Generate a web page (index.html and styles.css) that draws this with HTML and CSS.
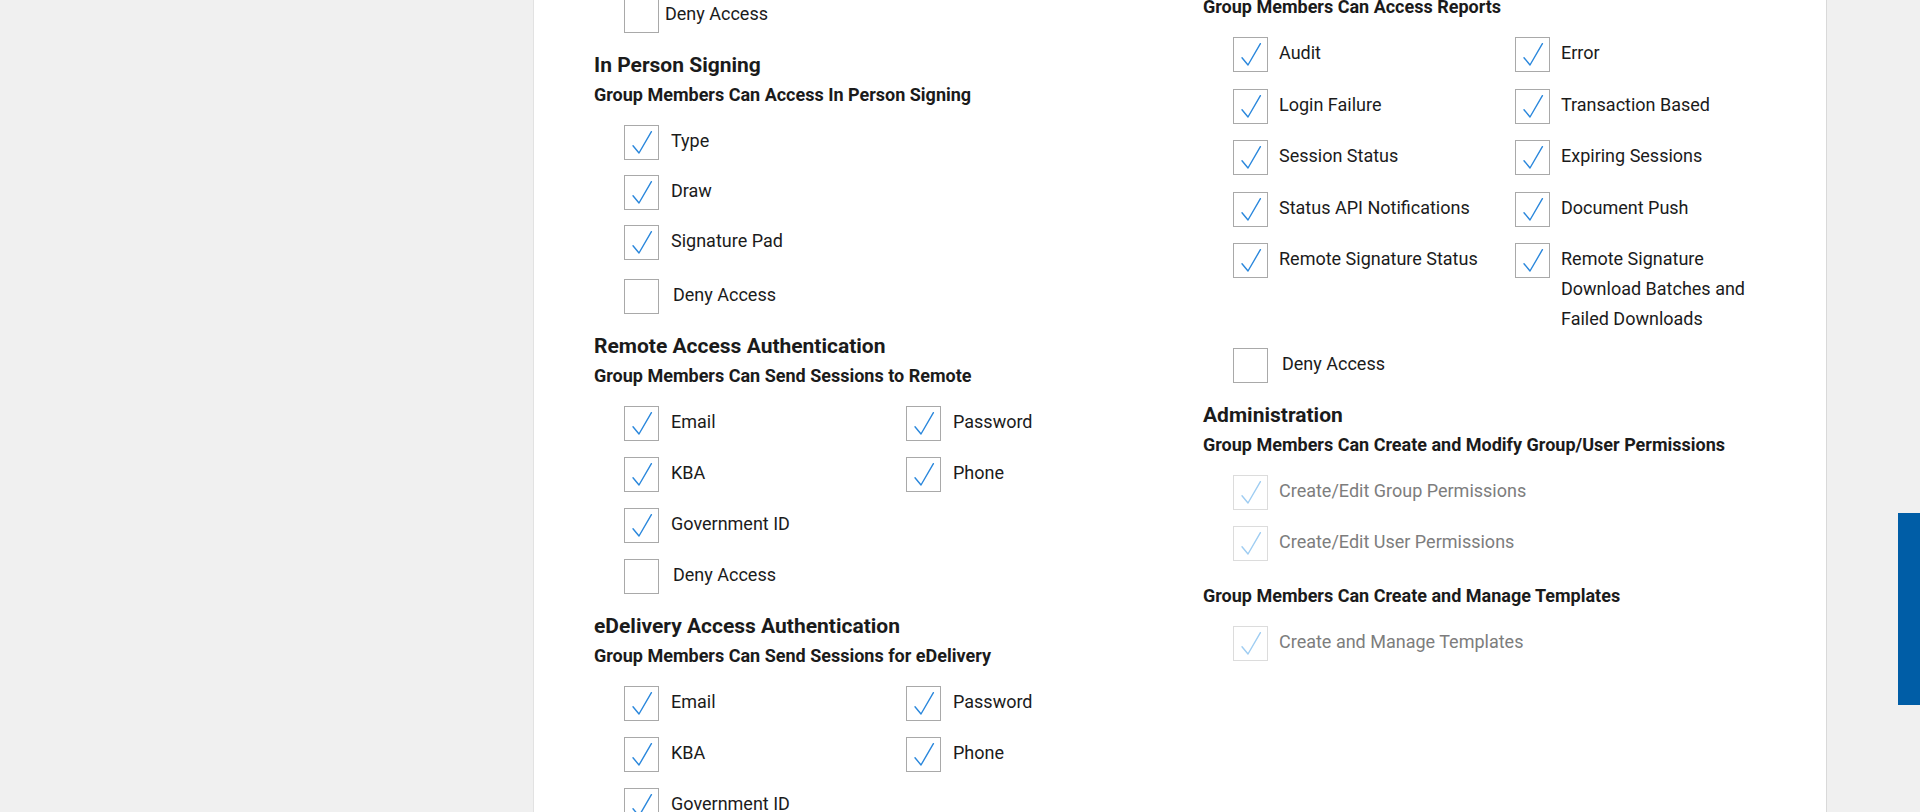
FILE: index.html
```html
<!DOCTYPE html>
<html lang="en">
<head>
<meta charset="utf-8">
<title>Group Permissions</title>
<link rel="stylesheet" href="styles.css">
</head>
<body>
<svg width="0" height="0" class="defs" aria-hidden="true">
  <symbol id="tick" viewBox="0 0 33 33">
    <polyline points="8,19.7 14,27 26.4,5.7" fill="none" stroke="currentColor" stroke-width="1.4" stroke-linecap="round" stroke-linejoin="round"/>
  </symbol>
</svg>
<div class="page">
  <main class="panel">
    <div class="col col-left">
      <div class="opts">
        <label class="opt deny deny-top"><span class="box"></span><span class="lbl">Deny Access</span></label>
      </div>

      <h2 class="head">In Person Signing</h2>
      <h3 class="sub">Group Members Can Access In Person Signing</h3>
      <div class="opts one tight">
        <label class="opt"><span class="box"><svg class="tick"><use href="#tick"/></svg></span><span class="lbl">Type</span></label>
        <label class="opt"><span class="box"><svg class="tick"><use href="#tick"/></svg></span><span class="lbl">Draw</span></label>
        <label class="opt"><span class="box"><svg class="tick"><use href="#tick"/></svg></span><span class="lbl">Signature Pad</span></label>
        <label class="opt deny"><span class="box"></span><span class="lbl">Deny Access</span></label>
      </div>

      <h2 class="head">Remote Access Authentication</h2>
      <h3 class="sub">Group Members Can Send Sessions to Remote</h3>
      <div class="opts two">
        <label class="opt"><span class="box"><svg class="tick"><use href="#tick"/></svg></span><span class="lbl">Email</span></label>
        <label class="opt"><span class="box"><svg class="tick"><use href="#tick"/></svg></span><span class="lbl">Password</span></label>
        <label class="opt"><span class="box"><svg class="tick"><use href="#tick"/></svg></span><span class="lbl">KBA</span></label>
        <label class="opt"><span class="box"><svg class="tick"><use href="#tick"/></svg></span><span class="lbl">Phone</span></label>
        <label class="opt"><span class="box"><svg class="tick"><use href="#tick"/></svg></span><span class="lbl">Government ID</span></label>
        <label class="opt deny span"><span class="box"></span><span class="lbl">Deny Access</span></label>
      </div>

      <h2 class="head">eDelivery Access Authentication</h2>
      <h3 class="sub">Group Members Can Send Sessions for eDelivery</h3>
      <div class="opts two">
        <label class="opt"><span class="box"><svg class="tick"><use href="#tick"/></svg></span><span class="lbl">Email</span></label>
        <label class="opt"><span class="box"><svg class="tick"><use href="#tick"/></svg></span><span class="lbl">Password</span></label>
        <label class="opt"><span class="box"><svg class="tick"><use href="#tick"/></svg></span><span class="lbl">KBA</span></label>
        <label class="opt"><span class="box"><svg class="tick"><use href="#tick"/></svg></span><span class="lbl">Phone</span></label>
        <label class="opt"><span class="box"><svg class="tick"><use href="#tick"/></svg></span><span class="lbl">Government ID</span></label>
        <label class="opt deny span"><span class="box"></span><span class="lbl">Deny Access</span></label>
      </div>
    </div>

    <div class="col col-right">
      <h3 class="sub first">Group Members Can Access Reports</h3>
      <div class="opts two loose">
        <label class="opt"><span class="box"><svg class="tick"><use href="#tick"/></svg></span><span class="lbl">Audit</span></label>
        <label class="opt"><span class="box"><svg class="tick"><use href="#tick"/></svg></span><span class="lbl">Error</span></label>
        <label class="opt"><span class="box"><svg class="tick"><use href="#tick"/></svg></span><span class="lbl">Login Failure</span></label>
        <label class="opt"><span class="box"><svg class="tick"><use href="#tick"/></svg></span><span class="lbl">Transaction Based</span></label>
        <label class="opt"><span class="box"><svg class="tick"><use href="#tick"/></svg></span><span class="lbl">Session Status</span></label>
        <label class="opt"><span class="box"><svg class="tick"><use href="#tick"/></svg></span><span class="lbl">Expiring Sessions</span></label>
        <label class="opt"><span class="box"><svg class="tick"><use href="#tick"/></svg></span><span class="lbl">Status API Notifications</span></label>
        <label class="opt"><span class="box"><svg class="tick"><use href="#tick"/></svg></span><span class="lbl">Document Push</span></label>
        <label class="opt"><span class="box"><svg class="tick"><use href="#tick"/></svg></span><span class="lbl">Remote Signature Status</span></label>
        <label class="opt"><span class="box"><svg class="tick"><use href="#tick"/></svg></span><span class="lbl">Remote Signature Download Batches and Failed Downloads</span></label>
        <label class="opt deny span"><span class="box"></span><span class="lbl">Deny Access</span></label>
      </div>

      <h2 class="head">Administration</h2>
      <h3 class="sub">Group Members Can Create and Modify Group/User Permissions</h3>
      <div class="opts one">
        <label class="opt off"><span class="box"><svg class="tick"><use href="#tick"/></svg></span><span class="lbl">Create/Edit Group Permissions</span></label>
        <label class="opt off"><span class="box"><svg class="tick"><use href="#tick"/></svg></span><span class="lbl">Create/Edit User Permissions</span></label>
      </div>

      <h3 class="sub alone">Group Members Can Create and Manage Templates</h3>
      <div class="opts one">
        <label class="opt off"><span class="box"><svg class="tick"><use href="#tick"/></svg></span><span class="lbl">Create and Manage Templates</span></label>
      </div>
    </div>
  </main>
</div>
<a class="tab" href="#" aria-label="Feedback"></a>
</body>
</html>
```

FILE: styles.css
```css
html, body {
  margin: 0;
  padding: 0;
  height: 100%;
}

body {
  background: #f0f0f0;
  font-family: Roboto, "Liberation Sans", Arial, sans-serif;
  color: #1b1b1b;
  overflow: hidden;
}

.defs {
  position: absolute;
  width: 0;
  height: 0;
}

.page {
  height: 812px;
  overflow: hidden;
}

.panel {
  margin-left: 533px;
  width: 1292px;
  height: 100%;
  background: #ffffff;
  border-left: 1px solid #e2e2e2;
  border-right: 1px solid #d9d9d9;
  box-sizing: content-box;
  display: grid;
  grid-template-columns: 60px 609px 564px;
  align-items: start;
}

.col-left {
  grid-column: 2;
  margin-top: -2px;
}

.col-right {
  grid-column: 3;
  margin-top: 0;
}

.head {
  margin: 18.7px 0 0 0;
  font-size: 21px;
  line-height: 26px;
  font-weight: 700;
  color: #1b1b1b;
}

.sub {
  margin: 6px 0 0 0;
  font-size: 18px;
  line-height: 22px;
  font-weight: 700;
  color: #1b1b1b;
}

.sub.first {
  margin-top: -4.15px;
}

.sub.alone {
  margin-top: 23.65px;
}

.opts {
  display: grid;
  row-gap: 16px;
  padding-left: 30px;
  margin-top: 19.3px;
}

.opts:first-child {
  margin-top: 0;
}

.opts.two {
  grid-template-columns: 282px 1fr;
}

.opts.one {
  grid-template-columns: 1fr;
}

.opts.tight {
  row-gap: 15px;
}

.opts.tight .deny {
  margin-top: 4px;
}

.opts.loose {
  row-gap: 16.5px;
}

.opts.loose .deny {
  margin-top: -2.5px;
}

.opt {
  display: flex;
  align-items: flex-start;
  cursor: pointer;
}

.opt.span {
  grid-column: 1 / -1;
}

.box {
  flex: none;
  width: 35px;
  height: 35px;
  box-sizing: border-box;
  border: 1px solid #a9a9a9;
  background: #fff;
  color: #2a87dc;
}

.tick {
  display: block;
  width: 33px;
  height: 33px;
}

.lbl {
  margin-left: 12px;
  padding-top: 1px;
  font-size: 18px;
  line-height: 30px;
  color: #1b1b1b;
}

.col-right .lbl {
  margin-left: 11px;
}

.deny .lbl,
.col-right .deny .lbl {
  margin-left: 14px;
}

.deny-top .lbl {
  margin-left: 6px;
}

.off .box {
  border-color: #dcdcdc;
  color: #9fcdf2;
}

.off .lbl {
  color: #7d7d7d;
}

.tab {
  position: fixed;
  right: 0;
  top: 513px;
  width: 22px;
  height: 192px;
  background: #005da6;
}
```
